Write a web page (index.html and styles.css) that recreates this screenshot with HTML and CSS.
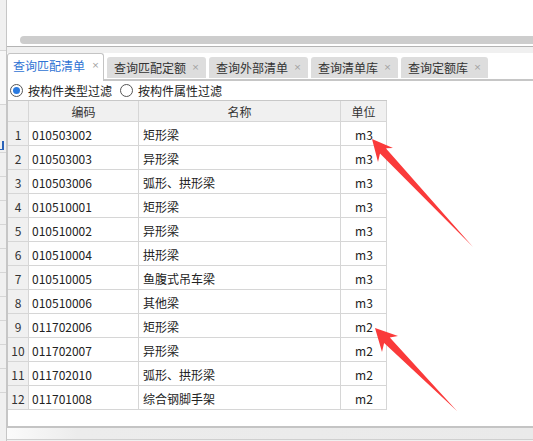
FILE: index.html
```html
<!DOCTYPE html>
<html lang="zh-CN">
<head>
<meta charset="utf-8">
<title>查询匹配清单</title>
<link rel="stylesheet" href="styles.css">
</head>
<body>
<div class="screen">
  <div class="side">
    <div class="side-seg seg-a"></div>
    <div class="side-seg seg-b"></div>
    <div class="side-seg seg-c"><span class="side-mark"></span></div>
    <div class="side-seg seg-d"></div>
    <div class="side-seg seg-d"></div>
    <div class="side-seg seg-d"></div>
    <div class="side-seg seg-d"></div>
    <div class="side-seg seg-d"></div>
    <div class="side-seg seg-d"></div>
    <div class="side-seg seg-d"></div>
    <div class="side-seg seg-d"></div>
    <div class="side-seg seg-d"></div>
    <div class="side-seg seg-d"></div>
  </div>
  <div class="main">
    <div class="top-panel"><div class="thumb"></div></div>
    <div class="band"></div>
    <div class="tabbar">
      <div class="tab active"><span class="tab-label">查询匹配清单</span><span class="close">×</span></div>
      <div class="tab"><span class="tab-label">查询匹配定额</span><span class="close">×</span></div>
      <div class="tab"><span class="tab-label">查询外部清单</span><span class="close">×</span></div>
      <div class="tab"><span class="tab-label">查询清单库</span><span class="close">×</span></div>
      <div class="tab"><span class="tab-label">查询定额库</span><span class="close">×</span></div>
    </div>
    <div class="panel">
      <div class="filters">
        <div class="radio"><span class="circle checked"></span>按构件类型过滤</div>
        <div class="radio"><span class="circle"></span>按构件属性过滤</div>
      </div>
      <div class="grid">
        <div class="hd no"></div><div class="hd">编码</div><div class="hd">名称</div><div class="hd">单位</div>

        <div class="no">1</div><div class="code">010503002</div><div class="name">矩形梁</div><div class="unit">m3</div>
        <div class="no">2</div><div class="code">010503003</div><div class="name">异形梁</div><div class="unit">m3</div>
        <div class="no">3</div><div class="code">010503006</div><div class="name">弧形、拱形梁</div><div class="unit">m3</div>
        <div class="no">4</div><div class="code">010510001</div><div class="name">矩形梁</div><div class="unit">m3</div>
        <div class="no">5</div><div class="code">010510002</div><div class="name">异形梁</div><div class="unit">m3</div>
        <div class="no">6</div><div class="code">010510004</div><div class="name">拱形梁</div><div class="unit">m3</div>
        <div class="no">7</div><div class="code">010510005</div><div class="name">鱼腹式吊车梁</div><div class="unit">m3</div>
        <div class="no">8</div><div class="code">010510006</div><div class="name">其他梁</div><div class="unit">m3</div>
        <div class="no">9</div><div class="code">011702006</div><div class="name">矩形梁</div><div class="unit">m2</div>
        <div class="no">10</div><div class="code">011702007</div><div class="name">异形梁</div><div class="unit">m2</div>
        <div class="no">11</div><div class="code">011702010</div><div class="name">弧形、拱形梁</div><div class="unit">m2</div>
        <div class="no">12</div><div class="code">011701008</div><div class="name">综合钢脚手架</div><div class="unit">m2</div>
      </div>
    </div>
    <div class="footer"></div>
  </div>
  <svg class="arrows" width="533" height="441" viewBox="0 0 533 441">
    <polygon points="372,139 393,148 385.8,148.3 473,247 380,153.4 378,162" fill="#fa3a3a"/>
    <polygon points="375,328 398,336 389.8,337.6 457,411 384.1,342.9 382,352" fill="#fa3a3a"/>
  </svg>
</div>
</body>
</html>
```
FILE: styles.css
```css
* { box-sizing: border-box; }
html, body { margin: 0; padding: 0; }
body {
  background: #f0f0f0;
  font-family: "Noto Sans CJK SC", "Noto Sans", sans-serif;
  font-size: 12px;
  color: #222;
}
.screen {
  position: relative;
  width: 533px;
  height: 441px;
  overflow: hidden;
  display: flex;
}
.side {
  width: 6px;
  flex: none;
  background: #f0f0f0;
  display: flex;
  flex-direction: column;
}
.side-seg { border-bottom: 1px solid #d6d6d6; }
.seg-a { height: 51px; }
.seg-b { height: 54px; background: #f7f7f7; }
.seg-c { height: 48px; padding-top: 36px; }
.side-mark {
  display: block;
  width: 4px;
  height: 9px;
  border-right: 2px solid #2a62b8;
  border-bottom: 1px solid #2a62b8;
}
.seg-d { height: 24px; }
.main {
  flex: 1;
  display: flex;
  flex-direction: column;
  border-left: 1px solid #c6c6c6;
}
.top-panel {
  height: 47px;
  background: #fff;
  border-bottom: 1px solid #b4b4b4;
  padding: 36px 0 0 13px;
}
.thumb {
  height: 8px;
  background: #cdcdcd;
  border-radius: 4px 0 0 4px;
}
.band {
  height: 6px;
  background: #f0f0f0;
}
.tabbar {
  height: 28px;
  background: #fff;
  border-bottom: 2px solid #c6c6c6;
  display: flex;
  align-items: flex-end;
  gap: 3px;
}
.tab {
  height: 21px;
  margin-bottom: 1px;
  background: #dddddd;
  border-radius: 3px 3px 0 0;
  display: flex;
  align-items: center;
  padding: 0 8px 0 7px;
  color: #333;
  line-height: 1;
}
.tab.active {
  height: 28px;
  margin-bottom: -2px;
  background: #fff;
  border: 1px solid #c4c4c4;
  border-bottom: none;
  padding: 0 5px 4px 5px;
  color: #2f73d4;
}
.tab-label { white-space: nowrap; }
.close {
  display: inline-flex;
  justify-content: center;
  width: 5px;
  margin-left: 7px;
  font-family: "DejaVu Sans", sans-serif;
  font-size: 9px;
  color: #a0a0a0;
}
.tab.active .close { margin-left: 8px; }
.panel {
  height: 347px;
  background: #fff;
  border-left: 1px solid #c6c6c6;
  border-bottom: 2px solid #c4c4c4;
}
.filters {
  height: 19px;
  display: flex;
  align-items: center;
  padding-left: 2px;
  color: #1a1a1a;
}
.radio {
  display: flex;
  align-items: center;
  margin-right: 8px;
  white-space: nowrap;
}
.circle {
  width: 13px;
  height: 13px;
  border: 1px solid #555;
  border-radius: 50%;
  margin-right: 5px;
  display: flex;
  align-items: center;
  justify-content: center;
  background: #fff;
}
.circle.checked::after {
  content: "";
  width: 7px;
  height: 7px;
  border-radius: 50%;
  background: #2a7ae0;
}
.grid {
  display: grid;
  grid-template-columns: 21px 110px 202px 46px;
  grid-auto-rows: 24px;
  grid-template-rows: 21px;
  width: 379px;
  border-top: 1px solid #c8c8c8;
}
.grid > div {
  border-right: 1px solid #d6d6d6;
  border-bottom: 1px solid #d6d6d6;
  display: flex;
  align-items: center;
  white-space: nowrap;
  padding-top: 1px;
}
.grid .hd {
  background: #f0f0f0;
  justify-content: center;
  color: #333;
  padding-top: 0;
}
.grid .no {
  background: #f0f0f0;
  justify-content: center;
  color: #333;
}
.grid .code { padding-left: 3px; }
.grid .name { padding-left: 4px; }
.grid .unit { justify-content: center; padding-left: 1px; }
.footer {
  height: 12px;
  background: linear-gradient(to right, #fbfbfb 0, #ececec 70px, #eaeaea 100%);
  border-bottom: 1px solid #cfcfcf;
}
.arrows {
  position: absolute;
  left: 0;
  top: 0;
  pointer-events: none;
}
```
